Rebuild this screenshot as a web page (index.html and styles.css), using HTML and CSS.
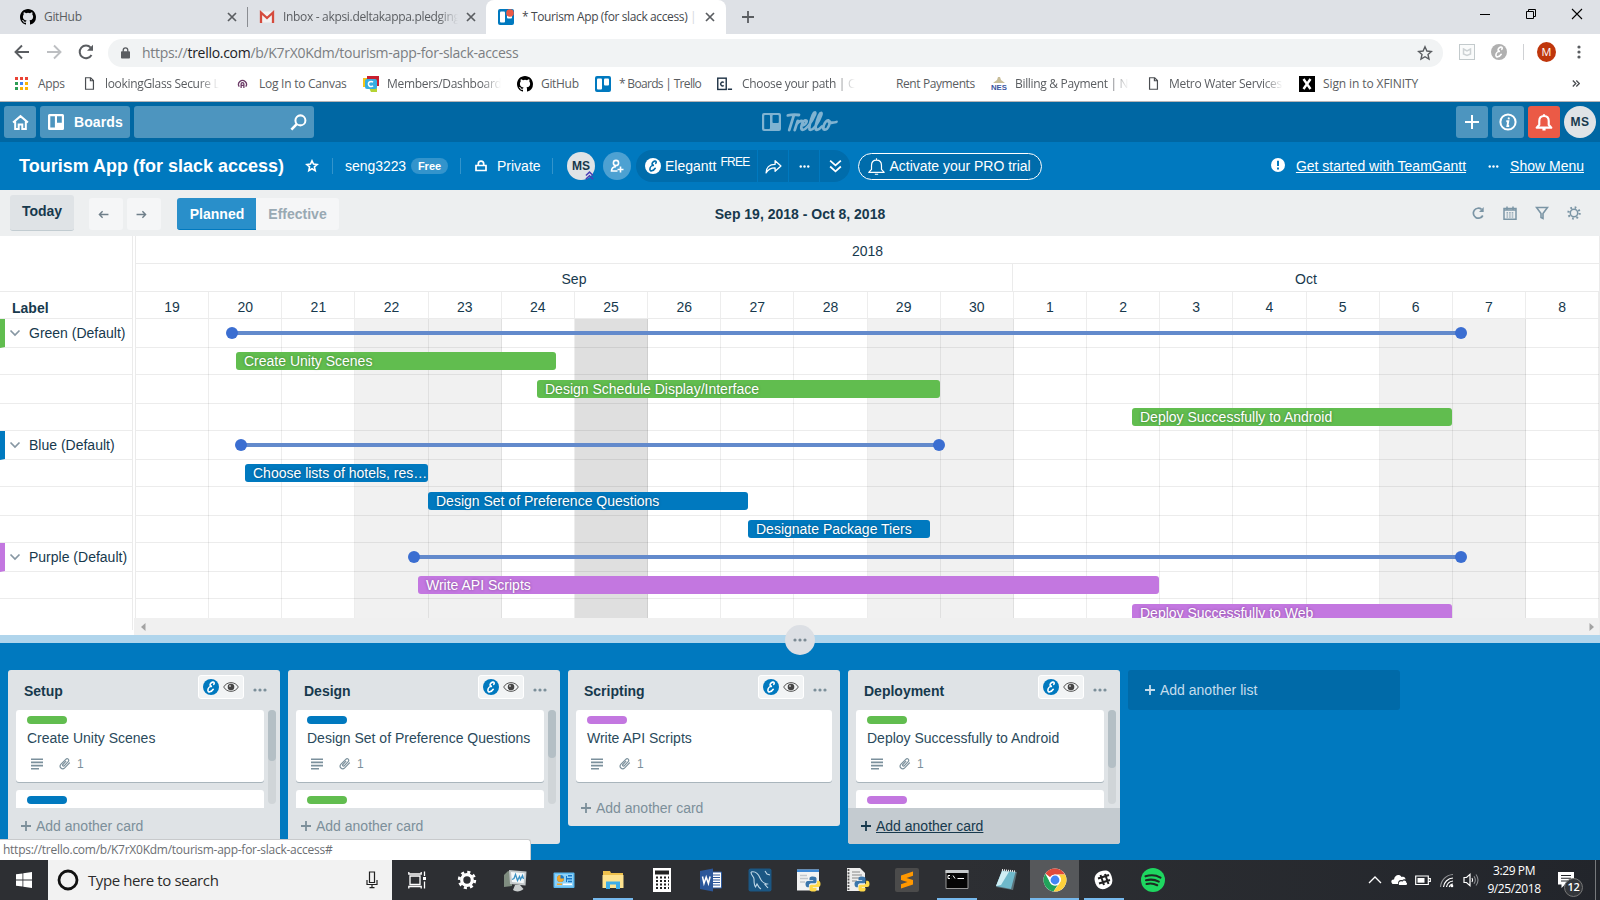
FILE: index.html
```html
<!DOCTYPE html>
<html lang="en">
<head>
<meta charset="utf-8">
<title>Tourism App (for slack access) | Trello</title>
<link rel="stylesheet" href="styles.css">
</head>
<body>
<svg class="defs" aria-hidden="true">
  <symbol id="octocat" viewBox="0 0 16 16"><path d="M8 0C3.58 0 0 3.58 0 8c0 3.54 2.29 6.53 5.47 7.59.4.07.55-.17.55-.38 0-.19-.01-.82-.01-1.49-2.01.37-2.53-.49-2.69-.94-.09-.23-.48-.94-.82-1.13-.28-.15-.68-.52-.01-.53.63-.01 1.08.58 1.23.82.72 1.21 1.87.87 2.33.66.07-.52.28-.87.51-1.07-1.78-.2-3.64-.89-3.64-3.95 0-.87.31-1.59.82-2.15-.08-.2-.36-1.02.08-2.12 0 0 .67-.21 2.2.82a7.6 7.6 0 0 1 4 0c1.53-1.04 2.2-.82 2.2-.82.44 1.1.16 1.92.08 2.12.51.56.82 1.27.82 2.15 0 3.07-1.87 3.75-3.65 3.95.29.25.54.73.54 1.48 0 1.07-.01 1.93-.01 2.2 0 .21.15.46.55.38A8 8 0 0 0 16 8c0-4.42-3.58-8-8-8z"/></symbol>
  <symbol id="close" viewBox="0 0 10 10"><path d="M1 1l8 8M9 1L1 9" fill="none" stroke="currentColor" stroke-width="1.7"/></symbol>
  <symbol id="trello" viewBox="0 0 16 16"><rect width="16" height="16" rx="2" fill="#0079bf"/><rect x="2" y="2.500" width="5" height="11" rx="1" fill="#fff"/><rect x="9" y="2.500" width="5" height="7" rx="1" fill="#fff"/></symbol>
  <symbol id="page" viewBox="0 0 12 16"><path d="M1.700 1.700h5.600l3 3v9.600H1.700zM7 1.700v3.300h3.300" fill="none" stroke="#4a4d51" stroke-width="1.300"/></symbol>
  <symbol id="boards" viewBox="0 0 18 18"><path fill="currentColor" fill-rule="evenodd" d="M2.500 1h13A1.500 1.500 0 0 1 17 2.500v13a1.500 1.500 0 0 1-1.500 1.500h-13A1.500 1.500 0 0 1 1 15.500v-13A1.500 1.500 0 0 1 2.500 1zM3.300 3.200v11.300h4.600V3.200zM10 3.200v6.500h4.800V3.200z"/></symbol>
  <symbol id="el" viewBox="0 0 16 16"><circle cx="8" cy="8" r="8" fill="var(--disc)"/><path d="M10.800 5.300c.9-1.300.3-2.500-1.200-2.200-1.900.4-3 2.600-2.300 3.700.3.500 1 .6 1.700.5-2.300 0-4.100 1.900-4.100 3.900 0 2.400 3.300 2.200 5.300-.9" fill="none" stroke="var(--ink)" stroke-width="1.600" stroke-linecap="round"/></symbol>
  <symbol id="eye" viewBox="0 0 16 12"><path d="M.7 6C3.800.200 12.200.200 15.300 6 12.200 11.800 3.800 11.800.7 6z" fill="none" stroke="#555" stroke-width="1"/><circle cx="8" cy="6" r="3.300" fill="#444"/><circle cx="7" cy="5" r="1" fill="#bbb"/></symbol>
  <symbol id="dots" viewBox="0 0 14 4"><g fill="currentColor"><circle cx="2" cy="2" r="1.600"/><circle cx="7" cy="2" r="1.600"/><circle cx="12" cy="2" r="1.600"/></g></symbol>
  <symbol id="desc" viewBox="0 0 12 12"><path d="M0 1.200h12M0 4.400h12M0 7.600h12M0 10.800h8" stroke="currentColor" stroke-width="1.600"/></symbol>
  <symbol id="clip" viewBox="0 0 12 12"><path d="M6.800 3.400L3.900 6.500c-.9 1 .4 2.200 1.300 1.300l4-4.200c1.700-1.900-.8-3.900-2.400-2.300L2 6.200c-2.500 2.800 1.100 6.200 3.700 3.700l4.800-5" fill="none" stroke="currentColor" stroke-width="1.200" stroke-linecap="round"/></symbol>
  <symbol id="chev" viewBox="0 0 12 8"><path d="M1.500 1.500L6 6l4.500-4.500" fill="none" stroke="#8797a3" stroke-width="1.700"/></symbol>
  <symbol id="plus" viewBox="0 0 12 12"><path d="M6 1v10M1 6h10" stroke="currentColor" stroke-width="1.800"/></symbol>
  <symbol id="bell" viewBox="0 0 16 16"><path d="M8 1v1.500M3.800 10.500V7.200C3.800 4.400 5.500 2.700 8 2.700s4.200 1.700 4.200 4.500v3.300l2.300 2.500H1.500zM6.600 14.500h2.800" fill="none" stroke="currentColor" stroke-width="var(--bw)" stroke-linejoin="round"/></symbol>
  <symbol id="python" viewBox="0 0 16 16"><path fill="#3b76ab" d="M7.800.5C4.700.5 4.500 1.800 4.500 2.600v1.700h3.700v.6H2.800C1.200 4.900.5 6.400.5 8s.7 3.300 2.100 3.300h1.300V9.400c0-1.200 1-2.200 2.200-2.200h3.600c1 0 1.800-.8 1.800-1.800V2.600C11.500 1.200 10.200.5 7.800.5z"/><path fill="#ffd94a" d="M8.200 15.500c3.100 0 3.300-1.300 3.300-2.100v-1.700H7.800v-.6h5.400c1.600 0 2.300-1.500 2.300-3.100s-.7-3.300-2.100-3.300h-1.300v1.900c0 1.200-1 2.200-2.200 2.200H6.300c-1 0-1.800.8-1.800 1.800v2.800c0 1.400 1.300 2.100 3.700 2.100z"/></symbol>
</svg>

<div class="tabs">
  <div class="tab tab-1"><svg class="i16"><use href="#octocat"/></svg><span class="tab-title">GitHub</span><svg class="i-close"><use href="#close"/></svg></div>
  <div class="tab tab-2">
    <svg class="i16" viewBox="0 0 16 16"><rect x="1" y="2.500" width="14" height="11" fill="#f2f2f2"/><path d="M2 14V3.500l6 5.500 6-5.500V14" fill="none" stroke="#d54b3d" stroke-width="2.300"/></svg>
    <span class="tab-title fade">Inbox - akpsi.deltakappa.pledging</span><svg class="i-close"><use href="#close"/></svg></div>
  <div class="tab tab-active">
    <svg class="i16" viewBox="0 0 16 16"><use href="#trello"/><circle cx="12" cy="4" r="3.800" fill="#eb5a46"/></svg>
    <span class="tab-title">* Tourism App (for slack access) <i>|</i></span><svg class="i-close"><use href="#close"/></svg></div>
  <svg class="newtab" viewBox="0 0 12 12"><path d="M6 0v12M0 6h12" stroke="#5a5d61" stroke-width="1.800"/></svg>
  <div class="winctl">
    <svg viewBox="0 0 12 12"><path d="M1 6.500h10" stroke="#000"/></svg>
    <svg viewBox="0 0 12 12"><path d="M1.500 3.500h7v7h-7zM3.500 3.500v-2h7v7h-2" fill="none" stroke="#000"/></svg>
    <svg viewBox="0 0 12 12"><path d="M1 1l10 10M11 1L1 11" stroke="#000" stroke-width="1.100"/></svg>
  </div>
</div>

<div class="nav">
  <svg class="nav-i" viewBox="0 0 16 16"><path d="M15 8H2M8 1.500L1.500 8 8 14.500" fill="none" stroke="#5a5d61" stroke-width="1.900"/></svg>
  <svg class="nav-i" viewBox="0 0 16 16"><path d="M1 8h13M8 1.500L14.500 8 8 14.500" fill="none" stroke="#bdbfc2" stroke-width="1.900"/></svg>
  <svg class="nav-i" viewBox="0 0 16 16"><path d="M13.500 11A6.300 6.300 0 1 1 12.700 3.700" fill="none" stroke="#5a5d61" stroke-width="2"/><path d="M15 .8v6H9z" fill="#5a5d61"/></svg>
  <div class="url">
    <svg class="lock" viewBox="0 0 10 13"><rect y="4.500" width="10" height="8" rx="1" fill="#5a5d61"/><path d="M2.500 5V3.300a2.500 2.500 0 0 1 5 0V5" fill="none" stroke="#5a5d61" stroke-width="1.500"/></svg>
    <span class="url-text">https://<b>trello.com</b>/b/K7rX0Kdm/tourism-app-for-slack-access</span>
    <svg class="i16 star" viewBox="0 0 16 16"><path d="M8 1.800l1.900 4.200 4.500.5-3.400 3 1 4.500L8 11.700 4 14l1-4.500-3.400-3L6.100 6z" fill="none" stroke="#5a5d61" stroke-width="1.400"/></svg>
  </div>
  <svg class="ext1" viewBox="0 0 16 16"><rect x=".5" y=".5" width="15" height="15" fill="#fafbfb" stroke="#c3cacc"/><path d="M4.500 5l3.500 2 3.500-2v5L8 11.500 4.500 10z" fill="none" stroke="#cdd2d4" stroke-width="1.500"/></svg>
  <svg class="ext2"><use href="#el"/></svg>
  <span class="nav-sep"></span>
  <span class="user">M</span>
  <svg class="kebab" viewBox="0 0 4 14"><g fill="#5a5d61"><circle cx="2" cy="2" r="1.600"/><circle cx="2" cy="7" r="1.600"/><circle cx="2" cy="12" r="1.600"/></g></svg>
</div>

<div class="marks">
  <div class="mark m1"><svg viewBox="0 0 13 13"><path fill="#ea4335" d="M0 0h3v3H0zM5 0h3v3H5zM10 0h3v3h-3z"/><path fill="#2d9d55" d="M0 5h3v3H0zM0 10h3v3H0z"/><path fill="#4285f4" d="M5 5h3v3H5z"/><path fill="#fbb305" d="M10 5h3v3h-3zM5 10h3v3H5zM10 10h3v3h-3z"/></svg>Apps</div>
  <div class="mark m2"><svg><use href="#page"/></svg><span class="fade">lookingGlass Secure L</span></div>
  <div class="mark m3"><svg viewBox="0 0 12 12"><path d="M2.500 9.500a4.300 4.300 0 1 1 7 0M4.500 11V6.500a1.500 1.500 0 0 1 3 0V11M4.500 8h3" fill="none" stroke="#6b3a66" stroke-width="1.400"/></svg>Log In to Canvas</div>
  <div class="mark m4"><svg viewBox="0 0 16 16"><path fill="#f4c519" d="M0 2h8v9H0z"/><path fill="#c8202f" d="M4 0h12v10H4z"/><path fill="#b5d334" d="M4 8h10v8H8z"/><rect x="2" y="3" width="12" height="10" rx="2" fill="#35aee2"/><path d="M10 6.300a2.600 2.600 0 1 0 0 3.400" fill="none" stroke="#fff" stroke-width="1.500"/></svg><span class="fade">Members/Dashboard</span></div>
  <div class="mark m5"><svg><use href="#octocat"/></svg>GitHub</div>
  <div class="mark m6"><svg><use href="#trello"/></svg>* Boards | Trello</div>
  <div class="mark m7"><svg viewBox="0 0 17 14"><rect x=".8" y=".8" width="9" height="12" fill="none" stroke="#1f3346" stroke-width="1.500"/><path d="M7.200 5.500a2 2 0 1 0 0 3M11.500 12.500H16" fill="none" stroke="#1f3346" stroke-width="1.500"/></svg><span class="fade">Choose your path | Co</span></div>
  <div class="mark m8">Rent Payments</div>
  <div class="mark m9"><svg viewBox="0 0 16 14"><path fill="#c8bd98" d="M7 0h2l1 3 4 3H2l4-3z"/><text class="nes" x="0" y="13" textLength="16" lengthAdjust="spacingAndGlyphs">NES</text></svg><span class="fade">Billing &amp; Payment | N</span></div>
  <div class="mark m10"><svg><use href="#page"/></svg><span class="fade">Metro Water Services</span></div>
  <div class="mark m11"><svg viewBox="0 0 16 16"><path d="M0 0h16v16H0z"/><path d="M4.500 3l7 10M11.500 3L4.500 13" stroke="#fff" stroke-width="2.400"/></svg>Sign in to XFINITY</div>
  <svg class="more" viewBox="0 0 8 7"><path d="M.8.5l3 3-3 3M4.300.5l3 3-3 3" fill="none" stroke="#4a4d51" stroke-width="1.300"/></svg>
</div>

<div class="top">
  <div class="tbtn home"><svg viewBox="0 0 16 16"><path d="M1 8l7-6 7 6M3 7v7.200h3.300V9.800h3.400v4.400H13V7" fill="none" stroke="#fff" stroke-width="1.900"/></svg></div>
  <div class="tbtn boards"><svg><use href="#boards"/></svg>Boards</div>
  <div class="tbtn search"><svg viewBox="0 0 16 16"><circle cx="9.800" cy="6" r="4.700" fill="none" stroke="#fff" stroke-width="1.900"/><path d="M6.300 9.500L1.300 14.700" stroke="#fff" stroke-width="2.400"/></svg></div>
  <svg class="logo" viewBox="0 0 78 24">
    <path fill="#80b3d1" fill-rule="evenodd" d="M2 3h15a2 2 0 0 1 2 2v14a2 2 0 0 1-2 2H2a2 2 0 0 1-2-2V5a2 2 0 0 1 2-2zM3 5q-.8 0-.8.8v12.400q0 .8.800.8h4q1 0 1-.8V5.800Q8 5 7 5zM11.500 5q-1 0-1 .8v6.400q0 .8 1 .8h4.300q1 0 1-.8V5.800q0-.8-1-.8z"/>
    <g fill="none" stroke="#80b3d1" transform="translate(4.500 0) skewX(-12)">
      <g stroke-width="2.800" stroke-linecap="round" stroke-linejoin="round"><path d="M22.500 5.300q5-1.300 11-.3M28.500 5L27 20M32.500 20l1-9M33.500 14q1.500-3.300 4-3M38.500 15.500c4 0 5.500-5 2.700-5-3 0-4.200 9-.7 9.300 3.500 0 7.500-8 9-15 .4-3-1.500-3.200-2.200 0-1 5-1.800 15 1 15 3 0 6.500-7 7.500-14.500.4-3-1.400-3.200-2.200 0-1 5-1.800 14.500.7 14.500 2.200 0 3.200-1.300 4.500-3.300"/><path d="M64 10.500c-3.500 0-5 9 -1.700 9.200 3.800 0 5-8.500 1.700-9.200 1 2.500 5 2.500 8.500 1.500"/></g>
    </g>
  </svg>
  <div class="top-right">
    <div class="tbtn sq"><svg viewBox="0 0 16 16"><path d="M8 1v14M1 8h14" stroke="#fff" stroke-width="2"/></svg></div>
    <div class="tbtn sq"><svg class="info" viewBox="0 0 18 18"><circle cx="9" cy="9" r="7.600" fill="none" stroke="#fff" stroke-width="2"/><path d="M9.900 4.500l-.3 1.800M7.300 8.300h2L8.400 13h1.800" fill="none" stroke="#fff" stroke-width="1.900"/></svg></div>
    <div class="tbtn sq red"><svg class="b2"><use href="#bell"/></svg></div>
    <div class="ms big">MS</div>
  </div>
</div>

<div class="head">
  <h1>Tourism App (for slack access)</h1>
  <svg class="hstar" viewBox="0 0 14 14"><path d="M7 1.800l1.500 3.300 3.600.4-2.700 2.400.8 3.700L7 9.700l-3.200 1.900.8-3.700L1.900 5.500l3.600-.4z" fill="none" stroke="#fff" stroke-width="1.600"/></svg>
  <i class="vsep s1"></i><span class="team">seng3223</span><span class="free">Free</span><i class="vsep s2"></i>
  <svg class="plock" viewBox="0 0 12 12"><path d="M1 5.500h10v5H1zM3.300 5.500V3.800a2.700 2.700 0 0 1 5.400 0v1.700" fill="none" stroke="#fff" stroke-width="1.700"/></svg>
  <span class="priv">Private</span><i class="vsep s3"></i>
  <div class="ms small">MS<svg viewBox="0 0 8 8"><path d="M.8 4L4 1l3.200 3M.8 7.200L4 4.200l3.200 3" fill="none" stroke="#4b3fb5" stroke-width="1.300"/></svg></div>
  <div class="addm"><svg viewBox="0 0 14 14"><circle cx="6" cy="4" r="2.600" fill="none" stroke="#fff" stroke-width="1.600"/><path d="M7.500 12H1.500c0-2.500 1.500-4.400 4.500-4.400M10.500 7.500v6M7.500 10.500h6" fill="none" stroke="#fff" stroke-width="1.600"/></svg></div>
  <div class="eleg">
    <div class="seg seg-1"><svg class="el-w"><use href="#el"/></svg><span>Elegantt</span><sup>FREE</sup></div>
    <div class="seg"><svg viewBox="0 0 16 14"><path d="M1 13c0-5 3-8 8.500-8V1.500l5.500 5-5.500 5V8.300C5.500 8.300 3 9.500 1 13z" fill="none" stroke="#fff" stroke-width="1.200" stroke-linejoin="round"/></svg></div>
    <div class="seg"><svg class="segdots"><use href="#dots"/></svg></div>
    <div class="seg seg-4"><svg viewBox="0 0 12 14"><path d="M1 1.500l5 4.500 5-4.500M1 7l5 4.500L11 7" fill="none" stroke="#fff" stroke-width="1.600"/></svg></div>
  </div>
  <div class="pro"><svg><use href="#bell"/></svg>Activate your PRO trial</div>
  <div class="head-right">
    <svg class="excl" viewBox="0 0 14 14"><circle cx="7" cy="7" r="7" fill="#fff"/><path d="M7 2.800v5.200M7 9.500v2" stroke="#0079bf" stroke-width="2"/></svg>
    <a class="tg">Get started with TeamGantt</a><svg class="mdots"><use href="#dots"/></svg><a class="sm">Show Menu</a>
  </div>
</div>

<div class="gbar">
  <div class="today">Today</div>
  <div class="arr a1"><svg viewBox="0 0 12 10"><path d="M11.500 5H1.500M5 1.500L1.500 5 5 8.500" fill="none" stroke="#6f7f8a" stroke-width="1.600"/></svg></div>
  <div class="arr"><svg viewBox="0 0 12 10"><path d="M.5 5h10M7 1.500L10.500 5 7 8.500" fill="none" stroke="#6f7f8a" stroke-width="1.600"/></svg></div>
  <div class="mode planned">Planned</div><div class="mode effective">Effective</div>
  <div class="range">Sep 19, 2018 - Oct 8, 2018</div>
  <div class="gtools">
    <svg viewBox="0 0 14 14"><path d="M11.800 9.500A5 5 0 1 1 10.600 3.400" fill="none" stroke="#7b95a5" stroke-width="1.700"/><path d="M12.700 1v5H8z" fill="#7b95a5"/></svg>
    <svg viewBox="0 0 14 14"><path d="M1 2.500h12v10.700H1z" fill="none" stroke="#7b95a5" stroke-width="1.500"/><path d="M1 4h12M4 .5v3M10 .5v3" stroke="#7b95a5" stroke-width="1.500"/><path d="M3.500 6.800h7M3.500 9h7M3.500 11h7" stroke="#7b95a5" stroke-width="1.200" stroke-dasharray="1.600 1"/></svg>
    <svg viewBox="0 0 14 14"><path d="M1.500 1.500h11L8 7.500v5l-2-1V7.500z" fill="none" stroke="#7b95a5" stroke-width="1.600"/></svg>
    <svg viewBox="0 0 14 14"><circle cx="7" cy="7" r="3.700" fill="none" stroke="#7b95a5" stroke-width="1.500"/><circle cx="7" cy="7" r="5.600" fill="none" stroke="#7b95a5" stroke-width="2.200" stroke-dasharray="1.700 2.698"/></svg>
  </div>
</div>

<div class="gantt">
  <div class="labels">
    <div class="lab-head">Label</div>
    <div class="row group green"><svg><use href="#chev"/></svg>Green (Default)</div>
    <div class="row"></div><div class="row"></div><div class="row"></div>
    <div class="row group blue"><svg><use href="#chev"/></svg>Blue (Default)</div>
    <div class="row"></div><div class="row"></div><div class="row"></div>
    <div class="row group purple"><svg><use href="#chev"/></svg>Purple (Default)</div>
    <div class="row"></div><div class="row last"></div>
  </div>
  <div class="split"></div>
  <div class="time">
    <div class="year">2018</div>
    <div class="months"><div class="sep">Sep</div><div class="oct">Oct</div></div>
    <div class="days"><span>19</span><span>20</span><span>21</span><span>22</span><span>23</span><span>24</span><span>25</span><span>26</span><span>27</span><span>28</span><span>29</span><span>30</span><span>1</span><span>2</span><span>3</span><span>4</span><span>5</span><span>6</span><span>7</span><span>8</span></div>
    <div class="body">
      <div class="cols"><i></i><i></i><i></i><i class="we"></i><i class="we"></i><i></i><i class="now"></i><i></i><i></i><i></i><i class="we"></i><i class="we"></i><i></i><i></i><i></i><i></i><i></i><i class="we"></i><i class="we"></i><i></i></div>
      <div class="rows">
        <div class="row"><div class="sum" style="margin-left:96px;width:1229px"></div></div>
        <div class="row"><div class="bar green" style="margin-left:100px;width:320px">Create Unity Scenes</div></div>
        <div class="row"><div class="bar green" style="margin-left:401px;width:403px">Design Schedule Display/Interface</div></div>
        <div class="row"><div class="bar green" style="margin-left:996px;width:320px">Deploy Successfully to Android</div></div>
        <div class="row"><div class="sum" style="margin-left:105px;width:698px"></div></div>
        <div class="row"><div class="bar blue" style="margin-left:109px;width:183px">Choose lists of hotels, res…</div></div>
        <div class="row"><div class="bar blue" style="margin-left:292px;width:320px">Design Set of Preference Questions</div></div>
        <div class="row"><div class="bar blue" style="margin-left:612px;width:182px">Designate Package Tiers</div></div>
        <div class="row"><div class="sum" style="margin-left:278px;width:1047px"></div></div>
        <div class="row"><div class="bar purple" style="margin-left:282px;width:741px">Write API Scripts</div></div>
        <div class="row"><div class="bar purple" style="margin-left:996px;width:320px">Deploy Successfully to Web</div></div>
      </div>
    </div>
    <div class="hscroll"><svg viewBox="0 0 5 8"><path d="M4.500 0v8L0 4z" fill="#a3a3a3"/></svg><svg viewBox="0 0 5 8"><path d="M.5 0v8L5 4z" fill="#a3a3a3"/></svg></div>
  </div>
</div>

<div class="divider"><div class="handle"><svg><use href="#dots"/></svg></div></div>

<div class="board">
  <div class="list">
    <div class="lh"><span>Setup</span><div class="badge"><svg class="el-b"><use href="#el"/></svg><svg class="eye"><use href="#eye"/></svg></div><svg class="ld"><use href="#dots"/></svg></div>
    <div class="cards scroll">
      <div class="stack">
        <div class="card"><i class="green"></i><p>Create Unity Scenes</p><div class="meta"><svg><use href="#desc"/></svg><svg><use href="#clip"/></svg><span>1</span></div></div>
        <div class="card"><i class="blue"></i></div>
      </div>
      <div class="sb"><div style="height:51px"></div></div>
    </div>
    <div class="add"><svg><use href="#plus"/></svg><span>Add another card</span></div>
  </div>
  <div class="list">
    <div class="lh"><span>Design</span><div class="badge"><svg class="el-b"><use href="#el"/></svg><svg class="eye"><use href="#eye"/></svg></div><svg class="ld"><use href="#dots"/></svg></div>
    <div class="cards scroll">
      <div class="stack">
        <div class="card"><i class="blue"></i><p>Design Set of Preference Questions</p><div class="meta"><svg><use href="#desc"/></svg><svg><use href="#clip"/></svg><span>1</span></div></div>
        <div class="card"><i class="green"></i></div>
      </div>
      <div class="sb"><div style="height:48px"></div></div>
    </div>
    <div class="add"><svg><use href="#plus"/></svg><span>Add another card</span></div>
  </div>
  <div class="list">
    <div class="lh"><span>Scripting</span><div class="badge"><svg class="el-b"><use href="#el"/></svg><svg class="eye"><use href="#eye"/></svg></div><svg class="ld"><use href="#dots"/></svg></div>
    <div class="cards single">
      <div class="stack">
        <div class="card"><i class="purple"></i><p>Write API Scripts</p><div class="meta"><svg><use href="#desc"/></svg><svg><use href="#clip"/></svg><span>1</span></div></div>
      </div>
    </div>
    <div class="add"><svg><use href="#plus"/></svg><span>Add another card</span></div>
  </div>
  <div class="list">
    <div class="lh"><span>Deployment</span><div class="badge"><svg class="el-b"><use href="#el"/></svg><svg class="eye"><use href="#eye"/></svg></div><svg class="ld"><use href="#dots"/></svg></div>
    <div class="cards scroll">
      <div class="stack">
        <div class="card"><i class="green"></i><p>Deploy Successfully to Android</p><div class="meta"><svg><use href="#desc"/></svg><svg><use href="#clip"/></svg><span>1</span></div></div>
        <div class="card"><i class="purple"></i></div>
      </div>
      <div class="sb"><div style="height:58px"></div></div>
    </div>
    <div class="add hover"><svg><use href="#plus"/></svg><span>Add another card</span></div>
  </div>
  <div class="addlist"><svg><use href="#plus"/></svg><span>Add another list</span></div>
  <div class="status">https://trello.com/b/K7rX0Kdm/tourism-app-for-slack-access#</div>
</div>

<div class="task">
  <div class="start"><svg viewBox="0 0 16 16"><path fill="#fff" d="M0 2.300L6.500 1.400v6.200H0zM7.300 1.300L16 0v7.600H7.300zM0 8.400h6.500v6.200L0 13.700zM7.300 8.400H16V16l-8.700-1.300z"/></svg></div>
  <div class="tsearch">
    <svg class="cort" viewBox="0 0 22 22"><circle cx="11" cy="11" r="9" fill="none" stroke="#111" stroke-width="2.800"/></svg><span>Type here to search</span>
    <svg class="mic" viewBox="0 0 12 18"><path d="M3.500 1h5v10.500h-5zM1 9v4.500h10V9M6 13.500V17M3.500 16.700h5" fill="none" stroke="#222" stroke-width="1.200"/></svg>
  </div>
  <div class="apps">
    <div class="app"><svg viewBox="0 0 24 24"><path d="M5 8h10v8.500H5zM3.800 4v2h12.400V4M3.800 20.500v-2h12.400v2M19.500 3.500v4.500M19.500 13.500v7" fill="none" stroke="#fff" stroke-width="1.300"/><path d="M18 9h3v3h-3z" fill="#fff"/></svg></div>
    <div class="app gear"><svg viewBox="0 0 24 24"><circle cx="12" cy="12" r="5.300" fill="none" stroke="#fff" stroke-width="3.200"/><circle cx="12" cy="12" r="7.800" fill="none" stroke="#fff" stroke-width="2.800" stroke-dasharray="3.063 3.063"/></svg></div>
    <div class="app"><svg viewBox="0 0 24 24"><path fill="#7f8d80" d="M1 7l4-4 4 1v14l-8 1z"/><path fill="#c3c8ca" d="M6 2l17.500 1.500-1 14L7 16z"/><path fill="#f4f8fa" d="M8 4l13.500 1.300-.8 10L9 14z"/><path d="M9 11.500l2-1 1.500-4 2 6 2-4 1 3 2-4 1 3.500" fill="none" stroke="#3a91c4" stroke-width="1.300"/><path fill="#c9cdce" d="M12 17h5l3.500 4c-3 3-8 3-10.500 1z"/></svg></div>
    <div class="app"><svg viewBox="0 0 24 24"><rect x="1.500" y="4.500" width="21" height="15.500" rx="1" fill="#5cb9f0"/><path fill="#8ed2f8" d="M3 6h18v12.500H3z"/><circle cx="8.500" cy="10.500" r="3.500" fill="#1876c5"/><path fill="#f4a62a" d="M8.500 10.500V7a3.500 3.500 0 1 0 3.500 3.500zM5 15.500h5V17H5z"/><path fill="#1876c5" d="M16 7h4v1.500h-4zM14 10h6v1.500h-6zM16 12.700h4v1.500h-4zM14 8h1v6h-1z"/><path fill="#fff" d="M11 15.500h9V17h-9z"/></svg></div>
    <div class="app run"><svg viewBox="0 0 24 24"><path fill="#eec14d" d="M2 3h7l1 2h12v15H2z"/><path fill="#fee38f" d="M1.500 7h21v13h-21z"/><path fill="#3daee9" d="M5 21v-7.500h14V21h-4v-4.500H9V21z"/></svg></div>
    <div class="app"><svg viewBox="0 0 24 24"><path fill="#fff" d="M3 0h18v24H3z"/><path fill="#222" d="M5 2.500h14v4H5z"/><path stroke="#222" stroke-width="1.800" stroke-dasharray="2 2" d="M6 9.500h13M6 13h13M6 16.500h13M6 20h13"/></svg></div>
    <div class="app"><svg viewBox="0 0 24 24"><path fill="#fff" stroke="#2b579a" d="M11 4h11.500v16H11z"/><path d="M14 7h7M14 9.500h7M14 12h7M14 14.500h7M14 17h7" stroke="#2b579a"/><path fill="#2b579a" d="M1 3l13-2.500v23L1 21z"/><path d="M3.500 8.500l1.500 7 2.200-6.500 2.200 6.500 1.700-7" fill="none" stroke="#fff" stroke-width="1.500"/></svg></div>
    <div class="app"><svg viewBox="0 0 24 24"><rect x=".5" y=".5" width="23" height="23" rx="2" fill="#1b5783"/><path d="M3 4c4-1 7 1 9 6s4 5 7 6l-2 .5 3 3.500M3 4c0 4 3 4 3 7s0 6 1.500 8L9 16c1 2 2 4 4 5M17 3l2 3 3 1" fill="none" stroke="#c2d9e8" stroke-width="1.100"/></svg></div>
    <div class="app"><svg viewBox="0 0 24 24"><path fill="#f2f3f3" d="M0 1.500h22v21H0z"/><path fill="#3f8ad6" d="M0 1.500h22V4H0z"/><path d="M3 7.500h7M3 10.500h8M3 14h5" stroke="#c2c7cc" stroke-width="1.500"/><use href="#python" x="8" y="8" width="16" height="16"/></svg></div>
    <div class="app"><svg viewBox="0 0 24 24"><path fill="#eee" d="M1 0h13l5 5v18H1z"/><path stroke="#555" stroke-width="1.800" stroke-dasharray="2 1.200" d="M2.500 1v21"/><path d="M6 4h8M6 7h10M6 10h7M6 13h5" stroke="#aaa" stroke-width="1.400"/><use href="#python" x="8" y="8" width="16" height="16"/></svg></div>
    <div class="app"><svg viewBox="0 0 24 24"><rect width="24" height="24" rx="2" fill="#4b4b4b"/><path fill="#ff9800" d="M6 7.500L18 3.500v4.300L11.500 10l6.500 2v4.500L6 20.500v-4.300l6.500-2.200L6 12z"/></svg></div>
    <div class="app run"><svg viewBox="0 0 24 24"><path fill="#050505" stroke="#999" d="M1 2.500h22v18H1z"/><path fill="#c6cacc" d="M.5 2h23v3H.500z"/><path d="M5 7.500H3v3h2M6.500 8v.1M6.500 10v.1M8 7.500l2 3M12.500 10.500H19" fill="none" stroke="#fff"/></svg></div>
    <div class="app"><svg viewBox="0 0 24 24"><path fill="#5b7178" d="M8 2l15 2-4 18L2 19z"/><path fill="#6fb9cb" d="M8 3l13.500 1-4.500 17L2 18z"/><path fill="#d0eef4" d="M8 3l7 .8L7 17 2 18z"/><path stroke="#eee" stroke-dasharray="1 1" stroke-width="2" d="M8 2l14 1.500"/></svg></div>
    <div class="app run cur"><svg viewBox="0 0 24 24"><circle cx="12" cy="12" r="11.500" fill="#fff"/><path fill="#e04a3a" d="M12 .5A11.500 11.500 0 0 1 22 6.500H12A5.500 5.500 0 0 0 7.200 9.300L2.500 5.500A11.500 11.500 0 0 1 12 .5z"/><path fill="#21a35a" d="M2.300 5.800A11.500 11.500 0 0 0 10.500 23.400L15 16.500A5.500 5.500 0 0 1 7.200 14.700z"/><path fill="#fdd03b" d="M22 6.500a11.500 11.500 0 0 1-11.500 16.900l6.300-8.600A5.500 5.500 0 0 0 15 6.500z"/><circle cx="12" cy="12" r="5.600" fill="#fff"/><circle cx="12" cy="12" r="4.400" fill="#4285f4"/></svg></div>
    <div class="app run slack"><svg viewBox="0 0 24 24"><path fill="#fff" d="M8 3.500c6-2 9.500-1.500 11.500 4.500s.500 9.500-4.500 12-9.500 1-11.500-4.500S2.500 6 8 3.500z"/><path d="M8.500 7l3.500 10M13 6l3.500 10M6 10.500l11-3.500M7 15.500l11-3.500" stroke="#222" stroke-width="2"/></svg></div>
    <div class="app"><svg viewBox="0 0 24 24"><circle cx="12" cy="12" r="12" fill="#1ed760"/><path d="M4.500 8.300c5-1.500 11-1 15 1.300M5 12.300c4.500-1.200 9-.7 12.800 1.300M5.500 16c4-1 7.500-.5 10.700 1.200" fill="none" stroke="#1d2b22" stroke-width="2.100" stroke-linecap="round"/></svg></div>
  </div>
  <div class="tray">
    <svg viewBox="0 0 16 16"><path d="M2 11l6-6 6 6" fill="none" stroke="#fff" stroke-width="1.300"/></svg>
    <svg viewBox="0 0 16 16"><path fill="#fff" d="M1.500 12C-1 9.500 1 7 3 7.500 3.500 3 8.500 1.500 10.500 5c3-1 4 1 4 2.500-1.500-.5-2.500 0-3.200.8C8.500 7.500 7 9 7 12z"/><path fill="#fff" d="M8 13c-1-3 1.500-4.500 3.300-3.300 1.500-2.200 4.200-.7 4 1 1.500.5.700 2.300-.3 2.300z"/></svg>
    <svg viewBox="0 0 16 16"><path d="M.7 4h12.600v8.500H.7zM13.500 6.500h1.800v3h-1.800" fill="none" stroke="#fff" stroke-width="1.200"/><path fill="#fff" d="M2.500 6h7v4.700h-7z"/></svg>
    <svg viewBox="0 0 16 16"><g fill="none" stroke="#fff" stroke-width="1.200"><path d="M1.500 15C2 8 7 3 14 2.500" opacity=".5"/><path d="M4.500 15c.5-5 4.500-8.700 9.500-9M7.500 15c.5-3 3-5.500 6.500-6M10.300 15c.4-1.500 1.700-2.800 3.700-3"/></g><circle cx="13" cy="14" r="1.300" fill="#fff"/></svg>
    <svg viewBox="0 0 16 16"><path d="M1 5.500h2.500L7 2.300v11.400L3.500 10.500H1z" fill="none" stroke="#fff" stroke-width="1.200"/><path d="M9 6q1.300 2 0 4" fill="none" stroke="#fff" stroke-width="1.100"/><path d="M11 4.300q2.700 3.700 0 7.400M13 2.500q4 5.500 0 11" fill="none" stroke="#8a8c90" stroke-width="1.100"/></svg>
  </div>
  <div class="clock"><span>3:29 PM</span><span>9/25/2018</span></div>
  <div class="notif"><svg viewBox="0 0 16 16"><path fill="#fff" d="M0 0h16v12.500H7L3.500 16v-3.500H0z"/><path d="M3 3.500h10M3 6.300h10M3 9h7" stroke="#23262b" stroke-width="1.100"/></svg><b>12</b></div>
  <div class="peek"></div>
</div>
</body>
</html>
```

FILE: styles.css
```css
* { box-sizing: border-box; }
body {
  margin: 0; width: 1600px; height: 900px; overflow: hidden;
  display: flex; flex-direction: column;
  font-family: "Liberation Sans", Arial, sans-serif; font-size: 14px; color: #17394d;
  --disc: #0079bf; --ink: #fff; --bw: 1;
}
.defs { display: none; }
svg { display: block; flex: none; }
.i16 { width: 16px; height: 16px; }
i { font-style: normal; }
.green { background: #61bd4f; }
.blue { background: #0079bf; }
.purple { background: #c377e0; }

/* browser tabs */
.tabs, .nav, .marks, .status, .task { font-family: "Open Sans", "Noto Sans", sans-serif; }
.tabs { height: 34px; background: #dee1e6; display: flex; align-items: center; flex: none; font-size: 12px; color: #5a5d61; letter-spacing: -.32px; }
.tab { display: flex; align-items: center; height: 34px; }
.tab-title { flex: 1; margin: -2px 0 0 8px; white-space: nowrap; overflow: hidden; }
.fade { overflow: hidden; white-space: nowrap; mask-image: linear-gradient(to right, #000 calc(100% - 20px), transparent); }
.i-close { width: 10px; height: 10px; color: #5a5d61; }
.tab-1 { width: 248px; padding: 0 11px 0 20px; background: linear-gradient(#8a8d92, #8a8d92) right center / 1px 20px no-repeat; }
.tab-2 { width: 238px; padding: 0 10px 0 11px; }
.tab-2 .tab-title { margin-right: 8px; }
.tab-active { width: 240px; padding: 0 11px 0 12px; background: #fff; border-radius: 8px 8px 0 0; color: #45494d; letter-spacing: -.38px; }
.tab-active i { color: #d5d8dc; }
.newtab { width: 12px; height: 12px; margin-left: 16px; }
.winctl { margin-left: auto; display: flex; gap: 34px; padding: 0 17px 6px 0; }
.winctl svg { width: 12px; height: 12px; }

/* address row */
.nav { height: 34px; flex: none; display: flex; align-items: center; background: #fff; padding: 2px 19px 0 14px; }
.nav-i { width: 16px; height: 16px; margin-right: 16px; }
.nav-i:nth-child(3) { margin-right: 14px; }
.url { flex: none; width: 1335px; height: 28px; margin-top: 1px; border-radius: 14px; background: #f1f3f4; display: flex; align-items: center; padding: 0 10px 0 13px; }
.lock { width: 9px; height: 12px; }
.url-text { margin: -1px 0 0 12px; flex: 1; font-size: 14px; letter-spacing: -.29px; color: #7b7e82; }
.url-text b { font-weight: 400; color: #202124; }
.ext1 { width: 16px; height: 16px; margin-left: 16px; }
.ext2 { width: 16px; height: 16px; margin-left: 16px; --disc: #b0b0b0; }
.nav-sep { width: 1px; height: 16px; background: #cfd1d4; margin: 0 13px 0 16px; }
.user { width: 20px; height: 20px; border-radius: 50%; background: #bf360c; color: #fff; font-size: 11px; line-height: 20px; text-align: center; }
.kebab { width: 4px; height: 14px; margin-left: 21px; }

/* bookmarks */
.marks { height: 34px; flex: none; background: #fff; border-bottom: 1px solid #b6b4b6; display: flex; align-items: center; padding: 0 16px 2px 15px; font-size: 12px; letter-spacing: -.32px; color: #5a5d61; }
.mark { display: flex; align-items: center; white-space: nowrap; flex: none; }
.mark svg { width: 16px; height: 16px; margin-right: 7px; }
.m1 { width: 69px; } .m1 svg { width: 13px; height: 13px; margin-right: 10px; }
.m2 { width: 153px; } .m2 svg { width: 11px; height: 15px; margin-right: 10px; } .m2 .fade { width: 114px; }
.m3 { width: 126px; letter-spacing: -.25px; } .m3 svg { width: 11px; height: 11px; margin-right: 11px; }
.m4 { width: 154px; letter-spacing: -.3px; } .m4 svg { margin-right: 8px; } .m4 .fade { width: 114px; }
.m5 { width: 78px; } .m5 svg { margin-right: 8px; }
.m6 { width: 122px; letter-spacing: -.68px; } .m6 svg { margin-right: 8px; }
.m7 { width: 179px; } .m7 svg { margin-right: 9px; } .m7 .fade { width: 113px; }
.m8 { width: 95px; letter-spacing: -.4px; }
.m9 { width: 157px; } .m9 svg { margin-right: 8px; } .m9 .fade { width: 114px; }
.m10 { width: 151px; } .m10 svg { width: 11px; height: 15px; margin-right: 10px; } .m10 .fade { width: 114px; }
.m11 { letter-spacing: -.1px; } .m11 svg { margin-right: 8px; }
.more { width: 8px; height: 7px; margin-left: auto; margin-right: 4px; }
.nes { font: bold 7px "Liberation Sans", sans-serif; fill: #3b56a0; letter-spacing: 0; }

/* trello top bar */
.top { height: 40px; flex: none; background: #0067a3; display: flex; align-items: center; padding: 0 4px; gap: 4px; }
.tbtn { height: 32px; background: #4d95bf; border-radius: 3px; display: flex; align-items: center; color: #fff; font-weight: 700; }
.home { width: 32px; justify-content: center; }
.home svg { width: 17px; height: 17px; }
.boards { width: 90px; padding-left: 7px; font-size: 14px; letter-spacing: .1px; }
.boards svg { width: 18px; height: 18px; margin-right: 9px; }
.search { width: 180px; justify-content: flex-end; padding-right: 7px; }
.search svg { width: 17px; height: 17px; }
.logo { width: 78px; height: 24px; margin-left: 444px; }
.top-right { margin-left: auto; display: flex; gap: 4px; }
.sq { width: 32px; justify-content: center; }
.sq svg { width: 16px; height: 16px; }
.sq .info { width: 18px; height: 18px; }
.red { background: #eb5a46; }
.sq .b2 { width: 18px; height: 18px; --bw: 1.900; }
.ms { background: #dfe3e6; border-radius: 50%; text-align: center; font-weight: 700; color: #17394d; }
.big { width: 32px; height: 32px; line-height: 32px; font-size: 12px; letter-spacing: .6px; }

/* board header */
.head { height: 48px; flex: none; background: #0079bf; color: #fff; display: flex; align-items: center; padding-left: 19px; white-space: nowrap; }
.head h1 { margin: 0; font-size: 18px; width: 286px; }
.hstar { width: 14px; height: 14px; margin-right: 1px; }
.vsep { width: 1px; height: 16px; background: #3394cb; }
.s1 { margin: 0 12px; }
.team { width: 66px; letter-spacing: -.05px; }
.free { width: 37px; height: 16px; border-radius: 8px; background: #3394cc; font-size: 11px; font-weight: 700; line-height: 17px; text-align: center; }
.s2 { margin: 0 14px 0 12px; }
.plock { width: 12px; height: 12px; margin-right: 10px; }
.priv { width: 55px; }
.s3 { margin-right: 14px; }
.small { width: 28px; height: 28px; line-height: 28px; font-size: 12px; position: relative; margin-right: 8px; }
.small svg { position: absolute; right: 1px; bottom: 0; width: 9px; height: 9px; }
.addm { width: 28px; height: 28px; border-radius: 50%; background: #4da1d2; display: flex; align-items: center; justify-content: center; margin-right: 5px; }
.addm svg { width: 14px; height: 14px; }
.eleg { display: flex; gap: 1px; }
.seg { width: 30px; height: 32px; background: #006cab; display: flex; align-items: center; justify-content: center; }
.seg svg { width: 17px; height: 15px; }
.seg .segdots { width: 11px; height: 3px; }
.seg-1 { width: 121px; justify-content: flex-start; border-radius: 16px 0 0 16px; padding-left: 9px; --disc: #fff; --ink: #006cab; }
.seg .el-w { width: 16px; height: 16px; margin-right: 4px; }
.seg-1 sup { font-size: 12px; letter-spacing: -.8px; letter-spacing: -.7px; margin: -8px 0 0 4px; line-height: 14px; vertical-align: 0; }
.seg-4 { border-radius: 0 16px 16px 0; }
.seg .seg-4 svg { width: 12px; }
.pro { margin-left: 8px; width: 184px; height: 27px; border: 1px solid #fff; border-radius: 14px; display: flex; align-items: center; background: #006cab; padding-left: 8px; letter-spacing: -.02px; }
.pro svg { width: 19px; height: 19px; margin-right: 3.500px; }
.head-right { margin-left: auto; display: flex; align-items: center; padding-right: 16px; }
.head-right a { text-decoration: underline; }
.excl { width: 14px; height: 14px; margin: 0 11px 2px 0; }
.mdots { width: 11px; height: 3px; margin: 0 11px 0 22px; }

/* gantt toolbar */
.gbar { height: 46px; flex: none; background: #edeff0; display: flex; align-items: flex-start; padding-left: 10px; font-weight: 700; }
.today { width: 64px; height: 36px; margin-top: 5px; background: #dfe3e6; border-bottom: 1px solid #c2ccd1; border-radius: 3px; line-height: 33px; text-align: center; }
.arr { width: 34px; height: 32px; margin: 8px 0 0 4px; background: #f5f6f7; border-radius: 3px; display: flex; align-items: center; padding-left: 9px; }
.arr svg { width: 11px; height: 9px; }
.a1 { margin-left: 15px; }
.mode { height: 32px; margin-top: 8px; line-height: 33px; text-align: center; }
.planned { width: 79px; margin-left: 16px; background: #298fca; color: #fff; border-bottom: 1px solid #0079bf; border-radius: 3px 0 0 3px; padding-left: 1px; }
.effective { width: 83px; background: #f5f6f7; color: #99a9b3; border-radius: 0 3px 3px 0; }
.range { width: 200px; margin: 15px 0 0 361px; text-align: center; line-height: 18px; white-space: nowrap; }
.gtools { margin-left: auto; display: flex; gap: 18px; padding: 16px 19px 0 0; }
.gtools svg { width: 14px; height: 14px; }

/* gantt chart */
.gantt { height: 399px; flex: none; display: flex; background: #fff; overflow: hidden; }
.labels { width: 133px; height: 394px; border-right: 1px solid #ebebeb; }
.lab-head { height: 83px; padding: 64px 0 0 12px; font-weight: 700; line-height: 16px; border-bottom: 1px solid #ebebeb; background: linear-gradient(#ebebeb, #ebebeb) 0 55px / 100% 1px no-repeat; }
.row { height: 29px; border-bottom: 1px solid rgba(0, 0, 0, .075); display: flex; align-items: center; }
.labels .row:nth-child(odd), .rows .row:nth-child(even) { height: 27px; }
.row.last { border-bottom: 0; }
.group { background: none; border-left: 5px solid; white-space: nowrap; border-left-color: #61bd4f; }
.group.blue { border-left-color: #0079bf; }
.group.purple { border-left-color: #c377e0; }
.group svg { width: 12px; height: 8px; margin: 0 8px 0 4px; }
.split { width: 3px; border-right: 1px solid #ebebeb; }
.time { flex: 1; display: flex; flex-direction: column; min-width: 0; border-right: 1px solid #ebebeb; }
.year, .months, .days { height: 28px; border-bottom: 1px solid #ebebeb; text-align: center; line-height: 30px; flex: none; }
.days { height: 27px; }
.months, .days, .cols { display: flex; }
.sep { width: 877px; border-right: 1px solid #ebebeb; }
.oct { flex: 1; }
.days span, .cols i { flex: 1; border-right: 1px solid rgba(0, 0, 0, .07); }
.body { height: 299px; position: relative; overflow: hidden; flex: none; }
.cols { position: absolute; inset: 0; }
.cols .we { background: #f1f1f1; }
.cols .now { background: #dfdfdf; }
.rows { position: relative; }
.bar { height: 18px; border-radius: 3px; color: #fff; line-height: 18px; padding-left: 8px; white-space: nowrap; text-shadow: 0 0 3px rgba(0, 0, 0, .35); }
.sum { height: 12px; display: flex; align-items: center; background: linear-gradient(#638acc, #638acc) 0 4px / 100% 4px no-repeat; }
.sum::before, .sum::after { content: ""; width: 12px; height: 12px; border-radius: 50%; background: #3b6ed1; margin-left: -6px; }
.sum::after { margin-left: auto; margin-right: -6px; }
.hscroll { height: 17px; margin-left: -2px; background: #f0f0f0; display: flex; align-items: center; justify-content: space-between; padding: 0 5px 0 7px; }
.hscroll svg { width: 5px; height: 8px; }

/* divider */
.divider { height: 8px; flex: none; background: #b0d5ec; position: relative; z-index: 1; }
.handle { position: absolute; left: 785px; top: -10px; width: 30px; height: 30px; border-radius: 50%; background: #dcdfe4; display: flex; align-items: center; justify-content: center; color: #7b8a94; }
.handle svg { width: 14px; height: 4px; }

/* lists */
.board { flex: 1; min-height: 0; background: #0079bf; position: relative; display: flex; align-items: flex-start; gap: 8px; padding: 27px 8px 0; overflow: hidden; }
.list { width: 272px; background: #dfe3e6; border-radius: 3px; overflow: hidden; }
.lh { height: 40px; display: flex; align-items: flex-start; padding: 5px 13px 0 16px; font-weight: 700; }
.lh span { flex: 1; line-height: 32px; }
.badge { width: 46px; height: 24px; background: #f2f4f5; border: 1px solid #fff; border-radius: 3px; display: flex; align-items: center; gap: 4px; padding-left: 4px; margin-right: 9px; }
.el-b { width: 16px; height: 16px; }
.eye { width: 16px; height: 12px; }
.ld { width: 14px; height: 4px; margin-top: 13px; color: #7b8f9a; }
.cards { display: flex; height: 98px; padding: 0 4px 0 8px; overflow: hidden; }
.single { height: 80px; padding-right: 8px; }
.stack { flex: 1; }
.card { background: #fff; height: 72px; border-radius: 3px; box-shadow: 0 1px 0 #a9b5bc; margin-bottom: 8px; padding: 6px 0 0 11px; white-space: nowrap; }
.card > i { display: block; width: 40px; height: 8px; border-radius: 4px; }
.card p { margin: 4px 0 0; line-height: 20px; color: #2a4a5c; }
.meta { display: flex; align-items: center; height: 16px; margin-top: 8px; padding-left: 4px; color: #7b909c; font-size: 12px; }
.meta svg { width: 12px; height: 12px; margin-right: 16px; }
.meta svg + svg { margin-right: 6px; }
.sb { width: 8px; height: 94px; margin-left: 4px; border-radius: 4px; background: #d0d5d8; }
.sb div { background: #b4bfc5; border-radius: 4px; }
.add { height: 36px; display: flex; align-items: center; padding-left: 12px; color: #7c8f9a; }
.add svg, .addlist svg { width: 12px; height: 12px; margin-right: 4px; }
.hover { background: #c4cbd0; color: #17394d; }
.hover span { text-decoration: underline; }
.addlist { width: 272px; height: 40px; border-radius: 3px; background: #006aa8; color: #c5dded; display: flex; align-items: center; padding-left: 16px; }
.status { position: absolute; left: 0; bottom: 0; width: 531px; height: 21px; background: #fff; border-top: 1px solid #c8cacc; border-right: 1px solid #c8cacc; border-radius: 0 3px 0 0; color: #6b6e72; font-size: 12px; line-height: 20px; padding-left: 3px; letter-spacing: -.26px; }

/* taskbar */
.task { height: 40px; flex: none; display: flex; background: linear-gradient(90deg, #2d2f33 60%, #22252b); color: #fff; }
.start { width: 48px; display: flex; align-items: center; justify-content: center; }
.start svg { width: 16px; height: 16px; }
.tsearch { width: 344px; background: #f2f2f2; color: #2b2b2b; display: flex; align-items: center; padding: 0 14px 0 9px; font-size: 15px; letter-spacing: -.4px; }
.cort { width: 22px; height: 22px; margin-right: 9px; }
.tsearch span { flex: 1; }
.mic { width: 12px; height: 18px; }
.apps { display: flex; }
.app { width: 49.100px; display: flex; align-items: center; justify-content: center; }
.app svg { width: 24px; height: 24px; }
.app.gear { padding-left: 2px; }
.run { background: linear-gradient(#76b9ed, #76b9ed) center bottom / 40px 2px no-repeat; }
.cur { background: linear-gradient(#76b9ed, #76b9ed) bottom / 100% 2px no-repeat, #56585b; }
.tray { margin-left: auto; display: flex; align-items: center; gap: 8px; }
.tray svg { width: 16px; height: 16px; }
.clock { width: 70px; display: flex; flex-direction: column; align-items: center; font-size: 12px; line-height: 18px; padding-top: 2px; letter-spacing: -.4px; }
.notif { width: 46px; position: relative; padding: 12px 0 0 9px; }
.notif svg { width: 16px; height: 16px; }
.notif b { position: absolute; left: 15px; top: 18px; width: 19px; height: 19px; border-radius: 50%; border: 1px solid #777; background: #33363a; font-size: 11px; font-weight: 600; line-height: 16px; text-align: center; letter-spacing: -.3px; }
.peek { width: 5px; border-left: 1px solid #77797c; }
```
